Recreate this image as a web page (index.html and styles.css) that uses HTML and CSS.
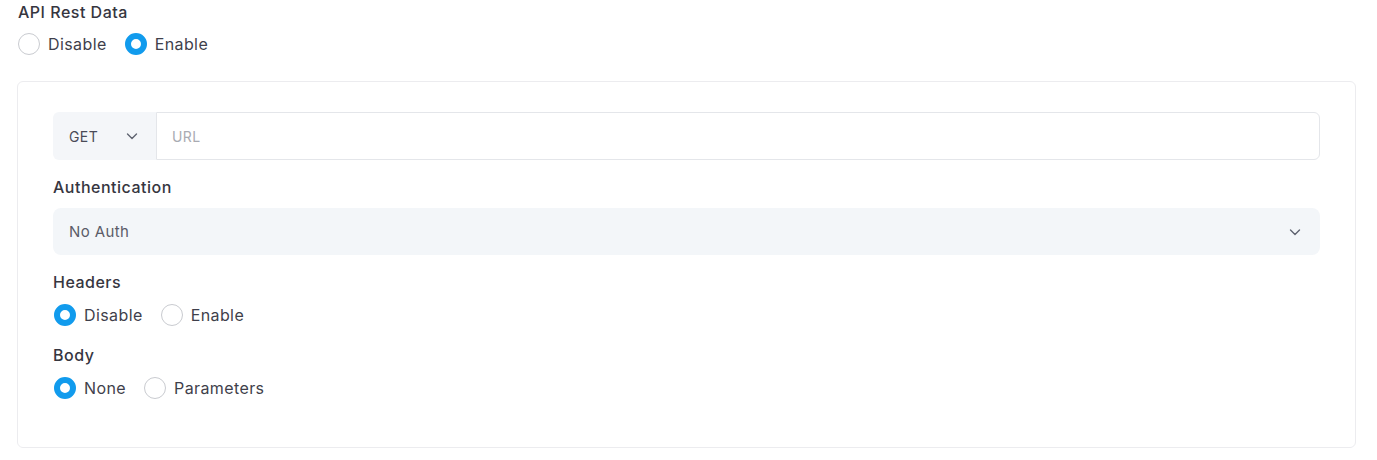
FILE: index.html
```html
<!DOCTYPE html>
<html lang="en">
<head>
    <meta charset="UTF-8">
    <meta name="viewport" content="width=device-width, initial-scale=1.0">
    <title>API Rest Data</title>
    <link rel="stylesheet" href="styles.css">
</head>
<body>
    <div class="field-label top-label">API Rest Data</div>
    <div class="radio-group">
        <label class="radio"><input type="radio" name="api" value="0"><span class="dot"></span>Disable</label>
        <label class="radio"><input type="radio" name="api" value="1" checked><span class="dot"></span>Enable</label>
    </div>

    <div class="card">
        <div class="url-row">
            <div class="method">
                <span>GET</span>
                <svg width="14" height="14" viewBox="0 0 14 14"><path d="M2.5 5 L7 9.5 L11.5 5" fill="none" stroke="#5f6470" stroke-width="1.4" stroke-linecap="round" stroke-linejoin="round"/></svg>
            </div>
            <input class="url-input" type="text" placeholder="URL">
        </div>

        <div class="field-label auth-label">Authentication</div>
        <div class="select">
            <span>No Auth</span>
            <svg width="14" height="14" viewBox="0 0 14 14"><path d="M2.5 5 L7 9.5 L11.5 5" fill="none" stroke="#5f6470" stroke-width="1.4" stroke-linecap="round" stroke-linejoin="round"/></svg>
        </div>

        <div class="field-label">Headers</div>
        <div class="radio-group">
            <label class="radio"><input type="radio" name="headers" value="0" checked><span class="dot"></span>Disable</label>
            <label class="radio"><input type="radio" name="headers" value="1"><span class="dot"></span>Enable</label>
        </div>

        <div class="field-label body-label">Body</div>
        <div class="radio-group">
            <label class="radio"><input type="radio" name="body" value="none" checked><span class="dot"></span>None</label>
            <label class="radio"><input type="radio" name="body" value="params"><span class="dot"></span>Parameters</label>
        </div>
    </div>
</body>
</html>
```

FILE: styles.css
```css
body { margin: 0; padding: 1px 21px 0 17px; font-family: "Inter", "Open Sans", Arial, sans-serif; font-size: 15px; color: #34343f; background: #fff; }
.field-label { line-height: 22px; font-size: 16px; font-weight: 500; letter-spacing: 0.5px; color: #36363f; margin: 16px 0 11px; }
.top-label { margin: 0 0 10px 1px; }
.auth-label { margin-bottom: 10px; }
.body-label { margin-top: 18px; margin-bottom: 11px; }
.radio-group { display: flex; align-items: center; height: 22px; }
.card .radio-group { margin-top: 11px; }
.card .field-label + .radio-group { margin-top: 0; }
.radio { display: flex; align-items: center; gap: 8px; margin-right: 18px; cursor: pointer; color: #3f3f4b; font-size: 16px; letter-spacing: 0.4px; line-height: 22px; }
.radio:first-child { margin-left: 1px; }
.radio input { display: none; }
.dot { width: 22px; height: 22px; box-sizing: border-box; border-radius: 50%; border: 1px solid #c9cbd0; background: #fff; }
.radio input:checked + .dot { border: 6px solid #119bed; background: #fff; }

.card { margin-top: 26px; border: 1px solid #ececef; border-radius: 6px; padding: 30px 35px 48px 35px; }
.url-row { display: flex; height: 48px; }
.method { width: 103px; box-sizing: border-box; display: flex; align-items: center; justify-content: space-between; padding: 0 17px 0 16px; background: #f4f6f9; border-radius: 6px 0 0 6px; color: #4a4b57; font-size: 14px; letter-spacing: 0.4px; }
.method svg, .select svg { display: block; }
.url-input { flex: 1; border: 1px solid #e4e6ea; border-radius: 0 6px 6px 0; padding: 0 15px; font-family: inherit; font-size: 14px; letter-spacing: 0.4px; outline: none; color: #333; }
.url-input::placeholder { color: #a9abb2; }
.select { height: 47px; box-sizing: border-box; display: flex; align-items: center; justify-content: space-between; padding: 0 18px 0 16px; background: #f3f6f9; border-radius: 8px; color: #5b5c68; font-size: 15px; letter-spacing: 0.4px; }
```
